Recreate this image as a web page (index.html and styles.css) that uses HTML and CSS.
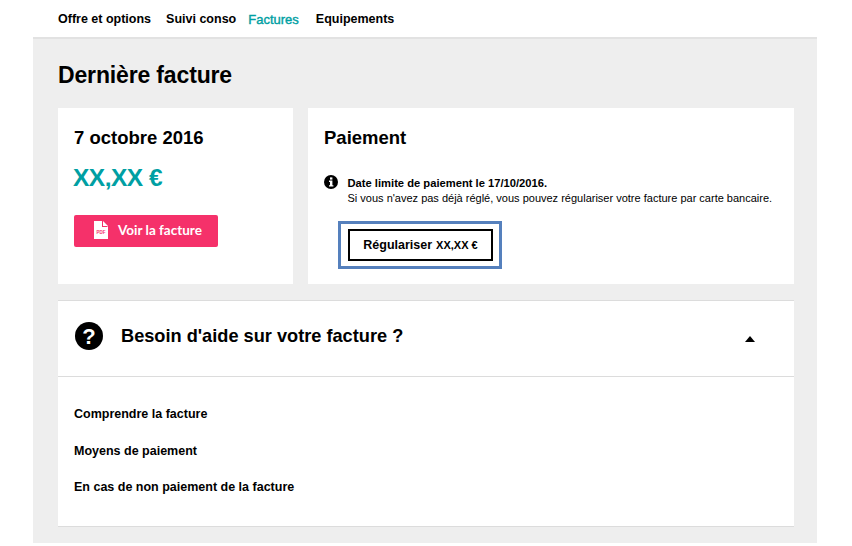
FILE: index.html
```html
<!DOCTYPE html>
<html lang="fr">
<head>
<meta charset="utf-8">
<title>Dernière facture</title>
<link rel="stylesheet" href="styles.css">
</head>
<body>
<div class="tabs">
  <a class="tab">Offre et options</a>
  <a class="tab">Suivi conso</a>
  <a class="tab active">Factures</a>
  <a class="tab">Equipements</a>
</div>
<div class="content">
  <h1>Dernière facture</h1>
  <div class="cards">
    <div class="card card-bill">
      <h2>7 octobre 2016</h2>
      <div class="amount">XX,XX €</div>
      <a class="btn-pdf">
        <svg width="14" height="18" viewBox="0 0 14 18"><path fill="#fff" d="M0 0h9l5 5v13H0z"/><path fill="#f5316a" d="M9 0v5h5l-1 1H8V0z"/><text x="7" y="13" text-anchor="middle" class="pdf-label">PDF</text></svg>
        Voir la facture
      </a>
    </div>
    <div class="card card-pay">
      <h2>Paiement</h2>
      <div class="notice">
        <svg class="info" width="14" height="14" viewBox="0 0 14 14"><circle cx="7" cy="7" r="7"/><rect x="6" y="2.4" width="2.4" height="2.2" fill="#fff"/><path fill="#fff" d="M5 5.6h3.4v4.6h1v1.4H5v-1.4h1V7H5z"/></svg>
        <p><b>Date limite de paiement le 17/10/2016.</b><br>Si vous n'avez pas déjà réglé, vous pouvez régulariser votre facture par carte bancaire.</p>
      </div>
      <div class="focus-ring"><a class="btn-pay"><b>Régulariser</b> <span class="btn-sum">XX,XX €</span></a></div>
    </div>
  </div>
  <div class="help">
    <div class="help-head">
      <svg width="28" height="28" viewBox="0 0 28 28"><circle cx="14" cy="14" r="14"/><text x="14" y="21.5" text-anchor="middle" class="q-mark">?</text></svg>
      <h3>Besoin d'aide sur votre facture ?</h3>
      <span class="arrow"></span>
    </div>
    <ul class="help-links">
      <li>Comprendre la facture</li>
      <li>Moyens de paiement</li>
      <li>En cas de non paiement de la facture</li>
    </ul>
  </div>
</div>
</body>
</html>
```

FILE: styles.css
```css
/* Page */
html, body { margin: 0; background: #fff; }

body {
  height: 546px;
  overflow: hidden;
  font-family: "Liberation Sans", Arial, sans-serif;
  color: #000;
}

/* Tabs */
.tabs {
  display: flex;
  height: 37px;
  padding: 1px 0 0 58px;
  align-items: center;
  font-size: 12.5px;
  font-weight: bold;
  box-sizing: border-box;
}

.tab { margin-right: 15px; white-space: nowrap; }
.tab.active { color: #009fa3; margin: 0 17px 0 -3px; font-size: 13px; font-weight: normal; -webkit-text-stroke: 0.4px #009fa3; }

/* Content */
.content {
  width: 784px;
  height: 506px;
  margin-left: 33px;
  padding: 0 23px 0 25px;
  box-sizing: border-box;
  background: #eee;
  border-top: 2px solid #e2e2e2;
}

h1 {
  margin: 0;
  padding-top: 23px;
  height: 69px;
  box-sizing: border-box;
  font-size: 23px;
  line-height: 27px;
  letter-spacing: -0.15px;
}

.cards { display: flex; gap: 15px; height: 176px; }
.card { background: #fff; padding: 19px 16px 0; box-sizing: border-box; height: 176px; }
.card-bill { width: 235px; }
.card-pay { flex: 1; }

h2 {
  margin: 0;
  font-size: 18.5px;
  line-height: 22px;
}

.amount {
  margin: 14px 0 0 -1px;
  font-size: 24.5px;
  line-height: 29px;
  font-weight: bold;
  letter-spacing: -0.5px;
  color: #009fa3;
}

.btn-pdf {
  display: flex;
  align-items: center;
  gap: 10px;
  width: 144px;
  height: 32px;
  margin-top: 23px;
  padding: 0 0 3px 20px;
  box-sizing: border-box;
  background: #f5316a;
  border-radius: 2px;
  color: #fff;
  font-family: "Lato", sans-serif;
  font-size: 13.5px;
  font-weight: bold;
}

.pdf-label { font: bold 4.5px "Liberation Sans", sans-serif; fill: #f5316a; }

/* Payment */
.notice { display: flex; gap: 9.5px; margin-top: 25px; }
.info { flex: none; margin-top: 1px; }
.notice p { margin: 0; font-size: 11px; line-height: 15px; padding-top: 2px; white-space: nowrap; }
.notice b { font-size: 11.2px; }

.focus-ring {
  width: 164px;
  height: 48px;
  margin: 15px 0 0 14px;
  border: 3px solid #5580bd;
  box-sizing: border-box;
  padding: 5px 6px 5px 7px;
}

.btn-pay {
  display: flex;
  align-items: center;
  justify-content: center;
  gap: 4px;
  height: 32px;
  border: 2px solid #000;
  box-sizing: border-box;
  font-size: 12.5px;
}

.btn-sum { font-size: 11px; font-weight: bold; }

/* Help */
.help {
  height: 227px;
  margin-top: 16px;
  background: #fff;
  border-top: 1px solid #dcdcdc;
  border-bottom: 1px solid #dcdcdc;
  box-sizing: border-box;
}

.help-head {
  display: flex;
  align-items: center;
  height: 76px;
  padding: 0 39px 5px 17px;
  box-sizing: border-box;
  border-bottom: 1px solid #dcdcdc;
}

.q-mark { font: bold 22px "Liberation Sans", sans-serif; fill: #fff; }

h3 { flex: 1; margin: 0 0 0 18px; font-size: 18.2px; line-height: 22px; }

.arrow {
  width: 0;
  height: 0;
  margin-top: 5px;
  border-left: 5px solid transparent;
  border-right: 5px solid transparent;
  border-bottom: 6px solid #000;
}

.help-links { margin: 0; padding: 30px 16px 0; list-style: none; font-size: 12.5px; font-weight: bold; }
.help-links li { height: 36.5px; line-height: 14px; }
```
